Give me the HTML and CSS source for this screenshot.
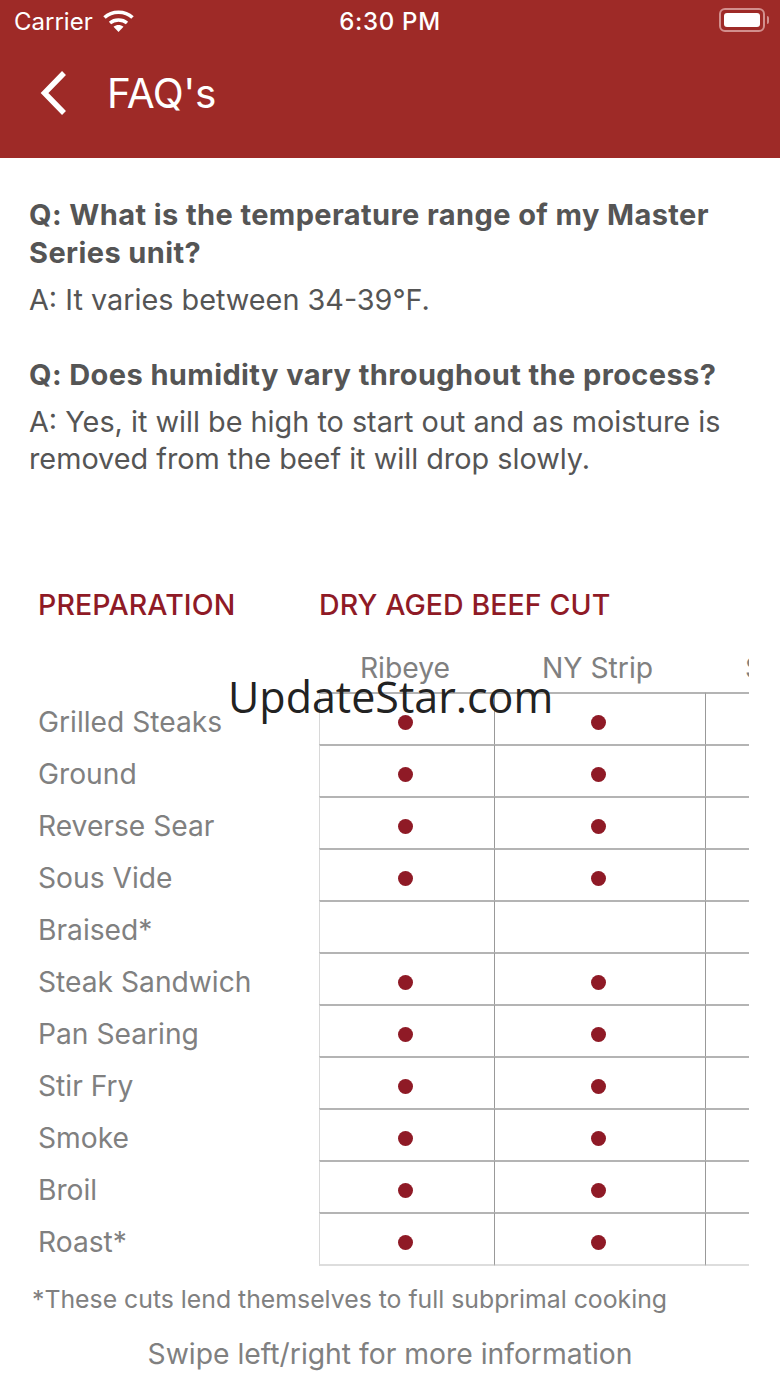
FILE: index.html
```html
<!DOCTYPE html>
<html lang="en">
<head>
  <meta charset="UTF-8" />
  <title>FAQ's</title>
  <link rel="stylesheet" href="styles.css">
</head>
<body>
  <header class="app-header">
    <div class="status-bar">
      <div class="status-left">
        <span>Carrier</span>
        <svg class="wifi" width="31" height="23" viewBox="0 0 31 23">
          <path d="M1.500 8.500C9 1.500 22 1.500 29.500 8.500" fill="none" stroke="#fff" stroke-width="3.600"/>
          <path d="M7 14C11.500 10 19.500 10 24 14" fill="none" stroke="#fff" stroke-width="3.400"/>
          <path d="M10.500 17.800L15.500 23L20.500 17.800C17.500 15.300 13.500 15.300 10.500 17.800Z" fill="#fff"/>
        </svg>
      </div>
      <div class="status-time">6:30 PM</div>
      <div class="battery-wrap">
        <div class="battery"><div class="battery-fill"></div></div>
        <div class="battery-tip"></div>
      </div>
    </div>
    <div class="nav-bar">
      <svg class="back" width="30" height="46" viewBox="0 0 30 46">
        <path d="M26 3L6.500 23L26 43" fill="none" stroke="#fff" stroke-width="5.500"/>
      </svg>
      <h1>FAQ's</h1>
    </div>
  </header>

  <section class="faq">
    <div class="faq-item">
      <h2>Q: What is the temperature range of my Master Series unit?</h2>
      <p>A: It varies between 34-39°F.</p>
    </div>
    <div class="faq-item">
      <h2>Q: Does humidity vary throughout the process?</h2>
      <p>A: Yes, it will be high to start out and as moisture is removed from the beef it will drop slowly.</p>
    </div>
  </section>

  <section class="chart">
    <div class="chart-titles">
      <div class="title-prep">PREPARATION</div>
      <div>DRY AGED BEEF CUT</div>
    </div>
    <div class="row row-head">
      <div class="label"></div>
      <div class="cells">
        <div class="cut c1">Ribeye</div>
        <div class="cut c2">NY Strip</div>
        <div class="cut c3">Skirt</div>
      </div>
    </div>
    <div class="row"><div class="label">Grilled Steaks</div><div class="cells"><div class="cell c1"><i class="dot"></i></div><div class="cell c2"><i class="dot"></i></div><div class="cell c3"></div></div></div>
    <div class="row"><div class="label">Ground</div><div class="cells"><div class="cell c1"><i class="dot"></i></div><div class="cell c2"><i class="dot"></i></div><div class="cell c3"></div></div></div>
    <div class="row"><div class="label">Reverse Sear</div><div class="cells"><div class="cell c1"><i class="dot"></i></div><div class="cell c2"><i class="dot"></i></div><div class="cell c3"></div></div></div>
    <div class="row"><div class="label">Sous Vide</div><div class="cells"><div class="cell c1"><i class="dot"></i></div><div class="cell c2"><i class="dot"></i></div><div class="cell c3"></div></div></div>
    <div class="row"><div class="label">Braised*</div><div class="cells"><div class="cell c1"></div><div class="cell c2"></div><div class="cell c3"></div></div></div>
    <div class="row"><div class="label">Steak Sandwich</div><div class="cells"><div class="cell c1"><i class="dot"></i></div><div class="cell c2"><i class="dot"></i></div><div class="cell c3"></div></div></div>
    <div class="row"><div class="label">Pan Searing</div><div class="cells"><div class="cell c1"><i class="dot"></i></div><div class="cell c2"><i class="dot"></i></div><div class="cell c3"></div></div></div>
    <div class="row"><div class="label">Stir Fry</div><div class="cells"><div class="cell c1"><i class="dot"></i></div><div class="cell c2"><i class="dot"></i></div><div class="cell c3"></div></div></div>
    <div class="row"><div class="label">Smoke</div><div class="cells"><div class="cell c1"><i class="dot"></i></div><div class="cell c2"><i class="dot"></i></div><div class="cell c3"></div></div></div>
    <div class="row"><div class="label">Broil</div><div class="cells"><div class="cell c1"><i class="dot"></i></div><div class="cell c2"><i class="dot"></i></div><div class="cell c3"></div></div></div>
    <div class="row row-last"><div class="label">Roast*</div><div class="cells"><div class="cell c1"><i class="dot"></i></div><div class="cell c2"><i class="dot"></i></div><div class="cell c3"></div></div></div>
    <div class="footnote">*These cuts lend themselves to full subprimal cooking</div>
    <div class="swipe">Swipe left/right for more information</div>
  </section>

  <div class="watermark">UpdateStar.com</div>
</body>
</html>
```

FILE: styles.css
```css
html, body {
  margin: 0;
  padding: 0;
}
body {
  position: relative;
  width: 780px;
  height: 1387px;
  overflow: hidden;
  background-color: #fff;
  font-family: Inter, "Noto Sans", sans-serif;
  color: #555;
}

/* header */
.app-header {
  height: 158px;
  box-sizing: border-box;
  background-color: #9e2a27;
  color: #fff;
}
.status-bar {
  display: grid;
  grid-template-columns: 1fr auto 1fr;
  align-items: center;
  height: 42px;
  padding: 0 9px;
  font-size: 24px;
}
.status-left {
  display: flex;
  align-items: center;
  gap: 10px;
  padding-left: 5px;
}
.status-time {
  font-weight: 500;
  letter-spacing: 0.7px;
}
.wifi {
  margin-top: -2px;
}
.battery-wrap {
  display: flex;
  align-items: center;
  justify-content: flex-end;
  gap: 2px;
  margin: -2px 2px 0 0;
}
.battery {
  box-sizing: border-box;
  width: 46px;
  height: 24px;
  padding: 3px;
  border: 2px solid #d28f8d;
  border-radius: 6px;
}
.battery-fill {
  height: 100%;
  background-color: #fff;
  border-radius: 3px;
}
.battery-tip {
  width: 2px;
  height: 8px;
  background-color: #d28f8d;
  border-radius: 0 2px 2px 0;
}
.nav-bar {
  display: flex;
  align-items: center;
  height: 104px;
  padding-left: 38px;
  margin-top: -1px;
}
.back {
  margin-right: 39px;
}
.nav-bar h1 {
  margin: 0;
  font-size: 40.500px;
  font-weight: 400;
  letter-spacing: -0.5px;
}

/* questions */
.faq {
  padding: 38px 29px 0;
  height: 378px;
  box-sizing: border-box;
}
.faq-item {
  margin-bottom: 37.500px;
}
.faq h2 {
  margin: 0 0 9.500px 0;
  font-size: 29px;
  line-height: 37.500px;
  font-weight: 700;
  letter-spacing: 0.4px;
  color: #555;
}
.faq p {
  margin: 0;
  font-size: 28.800px;
  line-height: 37.500px;
  font-weight: 400;
  color: #555;
}

/* chart */
.chart-titles {
  display: flex;
  align-items: center;
  height: 73px;
  margin-top: 32px;
  padding-left: 38px;
  font-size: 28.500px;
  font-weight: 500;
  letter-spacing: 0.1px;
  color: #8f1a26;
}
.title-prep {
  width: 281px;
}
.row {
  display: flex;
  height: 52px;
}
.row-head {
  height: 51px;
}
.row-last {
  height: 54px;
}
.label {
  width: 319px;
  box-sizing: border-box;
  padding: 8px 0 0 38px;
  display: flex;
  align-items: center;
  font-size: 28.200px;
  color: #808080;
}
.row-last .label {
  padding-top: 6px;
}
.cells {
  display: grid;
  grid-template-columns: 175px 211px 44px;
  width: 430px;
  overflow: hidden;
}
.cell {
  display: flex;
  align-items: center;
  justify-content: center;
  box-sizing: border-box;
  padding: 6px 3px 0 0;
  border-top: 2px solid #b4b4b4;
  border-left: 1px solid #999;
}
.cell.c1 {
  border-left-color: #d8d8d8;
}
.row-last .cell {
  border-bottom: 2px solid #ddd;
}
.dot {
  width: 15px;
  height: 15px;
  border-radius: 50%;
  background-color: #8f1a26;
}
.cut {
  align-self: end;
  padding-bottom: 7px;
  font-size: 28.300px;
  line-height: 34px;
  color: #808080;
  text-align: center;
  white-space: nowrap;
}
.cut.c1 {
  padding-right: 3px;
}
.cut.c2 {
  padding-right: 4px;
}
.cut.c3 {
  padding-left: 40px;
  text-align: left;
}
.footnote {
  margin-top: 18px;
  padding-left: 32px;
  font-size: 24.800px;
  line-height: 30px;
  color: #808080;
}
.swipe {
  margin-top: 23px;
  text-align: center;
  font-size: 28.300px;
  line-height: 34px;
  color: #808080;
}

/* overlay */
.watermark {
  position: absolute;
  left: 228px;
  top: 667px;
  font-family: "Open Sans", sans-serif;
  font-size: 43px;
  line-height: 60px;
  color: #222;
}
```
